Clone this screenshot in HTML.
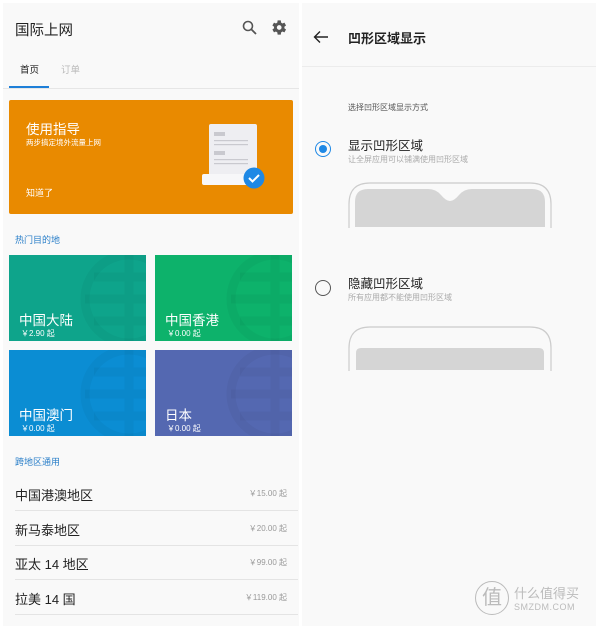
<!DOCTYPE html>
<html><head><meta charset="utf-8"><style>
*{margin:0;padding:0;box-sizing:border-box}
body{width:600px;height:629px;background:#fff;font-family:"Liberation Sans","Noto Sans CJK SC",sans-serif;position:relative;overflow:hidden}
.p{position:absolute;background:#f9f9f9}
.a{position:absolute;white-space:nowrap}
.tile{position:absolute;width:137px;height:86px;overflow:hidden;color:#fff}
.tile .n{position:absolute;left:10px;top:54px;font-size:13.5px}
.tile .pr{position:absolute;left:12px;top:73px;font-size:8px}
.tile svg{position:absolute;left:70px;top:-6px}
.row{position:absolute;left:15px;width:283px;height:35px;border-bottom:1px solid #e4e4e4;font-size:13px;color:#222}
.row span{position:absolute;top:9px}
.row i{position:absolute;right:11px;top:12px;font-style:normal;font-size:8px;color:#999}
</style></head><body>
<div class="p" style="left:3px;top:3px;width:296px;height:623px"></div>
<div class="p" style="left:302px;top:3px;width:294px;height:623px"></div>

<!-- left -->
<div class="a" style="left:15px;top:19px;font-size:14.5px;color:#222">国际上网</div>
<svg class="a" style="left:242px;top:20px" width="16" height="16" viewBox="0 0 16 16"><circle cx="6" cy="6" r="4.5" fill="none" stroke="#555" stroke-width="1.6"/><path d="M9.5 9.5L14 14" stroke="#555" stroke-width="1.8"/></svg>
<svg class="a" style="left:269px;top:18px" width="19" height="19" viewBox="0 0 24 24"><path fill="#555" fill-rule="evenodd" d="M19.4 13a7.5 7.5 0 000-2l2.1-1.6-2-3.5-2.5 1a7 7 0 00-1.7-1L14.9 3h-4l-.4 2.9a7 7 0 00-1.7 1l-2.5-1-2 3.5L6.4 11a7.5 7.5 0 000 2l-2.1 1.6 2 3.5 2.5-1a7 7 0 001.7 1l.4 2.9h4l.4-2.9a7 7 0 001.7-1l2.5 1 2-3.5zM12.9 15a3 3 0 110-6 3 3 0 010 6z"/></svg>
<div class="a" style="left:20px;top:62px;font-size:9.5px;color:#222">首页</div>
<div class="a" style="left:61px;top:62px;font-size:9.5px;color:#bbb">订单</div>
<div class="a" style="left:3px;top:88px;width:296px;height:1px;background:#e6e6e6"></div>
<div class="a" style="left:9px;top:86px;width:40px;height:2px;background:#1e7fd8"></div>

<div class="a" style="left:9px;top:100px;width:284px;height:114px;background:#e98a00;border-radius:2px;color:#fff">
 <div class="a" style="left:17px;top:18px;font-size:13.5px">使用指导</div>
 <div class="a" style="left:17px;top:37px;font-size:7.5px">两步搞定境外流量上网</div>
 <div class="a" style="left:17px;top:86px;font-size:9px">知道了</div>
 <svg class="a" style="left:190px;top:22px" width="70" height="70" viewBox="0 0 70 70">
  <rect x="10" y="2" width="48" height="58" rx="2" fill="#eeeef2"/>
  <rect x="3" y="52" width="50" height="11" rx="2" fill="#f7f7f9"/>
  <rect x="15" y="10" width="11" height="4" fill="#c9c9cf"/><rect x="15" y="18" width="34" height="1.2" fill="#c9c9cf"/><rect x="15" y="22" width="34" height="1.2" fill="#c9c9cf"/>
  <rect x="15" y="29" width="11" height="4" fill="#c9c9cf"/><rect x="15" y="37" width="34" height="1.2" fill="#c9c9cf"/><rect x="15" y="41" width="34" height="1.2" fill="#c9c9cf"/>
  <circle cx="55" cy="56" r="10.5" fill="#1e88e5"/><path d="M50 56l3.5 3.5 6.5-6.5" stroke="#fff" stroke-width="2" fill="none"/>
 </svg>
</div>

<div class="a" style="left:15px;top:233px;font-size:9px;color:#2a7fc9">热门目的地</div>
<div class="a" style="left:15px;top:455px;font-size:9px;color:#2a7fc9">跨地区通用</div>

<svg width="0" height="0" style="position:absolute"><defs><g id="gl"><circle cx="50" cy="50" r="44" fill="none" stroke="rgba(0,0,0,.035)" stroke-width="9"/><path d="M50 6v88M6 50h88M15 28h70M15 72h70" stroke="rgba(0,0,0,.035)" stroke-width="9"/></g></defs></svg>
<div class="tile" style="left:9px;top:255px;background:#0ea48b"><svg width="100" height="100"><use href="#gl"/></svg><div class="n">中国大陆</div><div class="pr">￥2.90 起</div></div>
<div class="tile" style="left:155px;top:255px;background:#0db26b"><svg width="100" height="100"><use href="#gl"/></svg><div class="n">中国香港</div><div class="pr">￥0.00 起</div></div>
<div class="tile" style="left:9px;top:350px;background:#0b8dd3"><svg width="100" height="100"><use href="#gl"/></svg><div class="n">中国澳门</div><div class="pr">￥0.00 起</div></div>
<div class="tile" style="left:155px;top:350px;background:#5468b1"><svg width="100" height="100"><use href="#gl"/></svg><div class="n">日本</div><div class="pr">￥0.00 起</div></div>

<div class="row" style="top:476px"><span>中国港澳地区</span><i>￥15.00 起</i></div>
<div class="row" style="top:511px"><span>新马泰地区</span><i>￥20.00 起</i></div>
<div class="row" style="top:545px"><span>亚太 14 地区</span><i>￥99.00 起</i></div>
<div class="row" style="top:580px"><span>拉美 14 国</span><i>￥119.00 起</i></div>

<!-- right -->
<svg class="a" style="left:313px;top:30px" width="16" height="14" viewBox="0 0 16 14"><path d="M15 7H2M7 1.5L1.5 7 7 12.5" stroke="#222" stroke-width="1.4" fill="none"/></svg>
<div class="a" style="left:348px;top:28px;font-size:13px;color:#222;font-weight:bold">凹形区域显示</div>
<div class="a" style="left:302px;top:66px;width:294px;height:1px;background:#ececec"></div>
<div class="a" style="left:348px;top:102px;font-size:8px;color:#555">选择凹形区域显示方式</div>

<div class="a" style="left:315px;top:141px;width:16px;height:16px;border:1.5px solid #1e88e5;border-radius:50%"></div>
<div class="a" style="left:319px;top:145px;width:8px;height:8px;background:#1e88e5;border-radius:50%"></div>
<div class="a" style="left:348px;top:135px;font-size:12.5px;color:#222">显示凹形区域</div>
<div class="a" style="left:348px;top:154px;font-size:8px;color:#aaa">让全屏应用可以铺满使用凹形区域</div>
<svg class="a" style="left:348px;top:182px" width="204" height="46" viewBox="0 0 204 46">
 <path d="M1 46V22Q1 1 22 1H182Q203 1 203 22V46" fill="none" stroke="#ccc" stroke-width="1.2"/>
 <path d="M7 45V20Q7 7 20 7H80Q88 7 93 13Q98 19 102 19Q106 19 111 13Q116 7 124 7H184Q197 7 197 20V45Z" fill="#d5d5d5"/>
</svg>

<div class="a" style="left:315px;top:280px;width:16px;height:16px;border:1.3px solid #555;border-radius:50%"></div>
<div class="a" style="left:348px;top:273px;font-size:12.5px;color:#222">隐藏凹形区域</div>
<div class="a" style="left:348px;top:292px;font-size:8px;color:#aaa">所有应用都不能使用凹形区域</div>
<svg class="a" style="left:348px;top:326px" width="204" height="45" viewBox="0 0 204 45">
 <path d="M1 45V22Q1 1 22 1H182Q203 1 203 22V45" fill="none" stroke="#ccc" stroke-width="1.2"/>
 <path d="M8 44V27Q8 22 13 22H191Q196 22 196 27V44Z" fill="#d5d5d5"/>
</svg>

<div class="a" style="left:475px;top:581px;width:34px;height:34px;border:1.2px solid #bbb;border-radius:50%;font-size:20px;color:#bbb;text-align:center;line-height:32px">值</div>
<div class="a" style="left:514px;top:583px;font-size:13px;color:#bbb">什么值得买</div>
<div class="a" style="left:514px;top:602px;font-size:9px;color:#bbb;letter-spacing:.5px">SMZDM.COM</div>
</body></html>
